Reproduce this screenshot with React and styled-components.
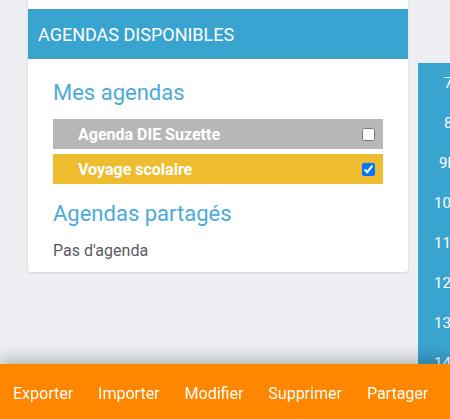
import React from "react";
import styled, { createGlobalStyle } from "styled-components";

const GlobalStyle = createGlobalStyle`
  html, body { margin: 0; padding: 0; }
  body {
    background: #eeeff3;
    font-family: Roboto, "Liberation Sans", Arial, sans-serif;
    overflow: hidden;
  }
`;

const Page = styled.div`
  width: 450px;
  height: 419px;
  overflow: hidden;
  background: #eeeff3;
  display: flex;
  align-items: flex-start;
  gap: 10px;
  padding-left: 28px;
  box-sizing: border-box;
`;

const Card = styled.section`
  flex: 0 0 380px;
  background: #ffffff;
  padding-top: 9px;
  border-radius: 0 0 3px 3px;
  box-shadow: 0 1px 3px rgba(0, 0, 0, 0.12);
`;

const CardHeader = styled.header`
  height: 50px;
  background: #3aa4d0;
  color: #ffffff;
  display: flex;
  align-items: center;
  padding-left: 10px;
  font-size: 18px;
  text-transform: uppercase;
`;

const CardBody = styled.div`
  padding: 21px 25px 11px 25px;
`;

const SectionTitle = styled.h2`
  margin: 0 0 ${(p) => p.$gap}px 0;
  font-size: 22px;
  line-height: 26px;
  font-weight: 400;
  color: #4aabda;
`;

const AgendaList = styled.div`
  display: flex;
  flex-direction: column;
  gap: 5px;
  margin-bottom: 17px;
`;

const AgendaRow = styled.label`
  height: 30px;
  display: flex;
  align-items: center;
  justify-content: space-between;
  padding: 0 5px 0 25px;
  background: ${(p) => p.$color};
  color: #ffffff;
  font-weight: 700;
  font-size: 16px;
`;

const Check = styled.input`
  width: 13px;
  height: 13px;
  margin: 0 3px 0 0;
`;

const EmptyText = styled.p`
  margin: 0;
  font-size: 16px;
  line-height: 20px;
  color: #5a5a5e;
`;

const Gutter = styled.div`
  flex: 0 0 60px;
  margin-top: 63px;
  background: #3aa4d0;
  display: flex;
  flex-direction: column;
`;

const HourLabel = styled.div`
  height: 40px;
  display: flex;
  align-items: center;
  padding-left: ${(p) => p.$indent}px;
  color: #ffffff;
  font-size: 15px;
`;

const ActionBar = styled.nav`
  position: fixed;
  left: 0;
  right: 0;
  bottom: 0;
  height: 55px;
  padding-top: 3px;
  box-sizing: border-box;
  background: #ff8700;
  display: flex;
  align-items: center;
  box-shadow: 0 -4px 18px rgba(0, 0, 0, 0.28);
`;

const ActionButton = styled.button`
  border: none;
  background: transparent;
  color: #ffffff;
  font-family: Roboto, "Liberation Sans", Arial, sans-serif;
  font-size: 16px;
  padding: 0 12.5px;
  height: 100%;
  cursor: pointer;
  &:first-child { padding-left: 13px; }
`;

const hours = [
  { t: "7h", i: 26 },
  { t: "8h", i: 26 },
  { t: "9h", i: 21 },
  { t: "10h", i: 16 },
  { t: "11h", i: 16 },
  { t: "12h", i: 16 },
  { t: "13h", i: 16 },
  { t: "14h", i: 16 },
];

export default function App() {
  return (
    <>
      <GlobalStyle />
      <Page>
        <Card>
          <CardHeader>Agendas disponibles</CardHeader>
          <CardBody>
            <SectionTitle $gap={13}>Mes agendas</SectionTitle>
            <AgendaList>
              <AgendaRow $color="#b6b7b9">
                Agenda DIE Suzette
                <Check type="checkbox" />
              </AgendaRow>
              <AgendaRow $color="#edbd2f">
                Voyage scolaire
                <Check type="checkbox" defaultChecked />
              </AgendaRow>
            </AgendaList>
            <SectionTitle $gap={14}>Agendas partagés</SectionTitle>
            <EmptyText>Pas d'agenda</EmptyText>
          </CardBody>
        </Card>
        <Gutter>
          {hours.map((h) => (
            <HourLabel key={h.t} $indent={h.i}>
              {h.t}
            </HourLabel>
          ))}
        </Gutter>
      </Page>
      <ActionBar>
        <ActionButton>Exporter</ActionButton>
        <ActionButton>Importer</ActionButton>
        <ActionButton>Modifier</ActionButton>
        <ActionButton>Supprimer</ActionButton>
        <ActionButton>Partager</ActionButton>
      </ActionBar>
    </>
  );
}
